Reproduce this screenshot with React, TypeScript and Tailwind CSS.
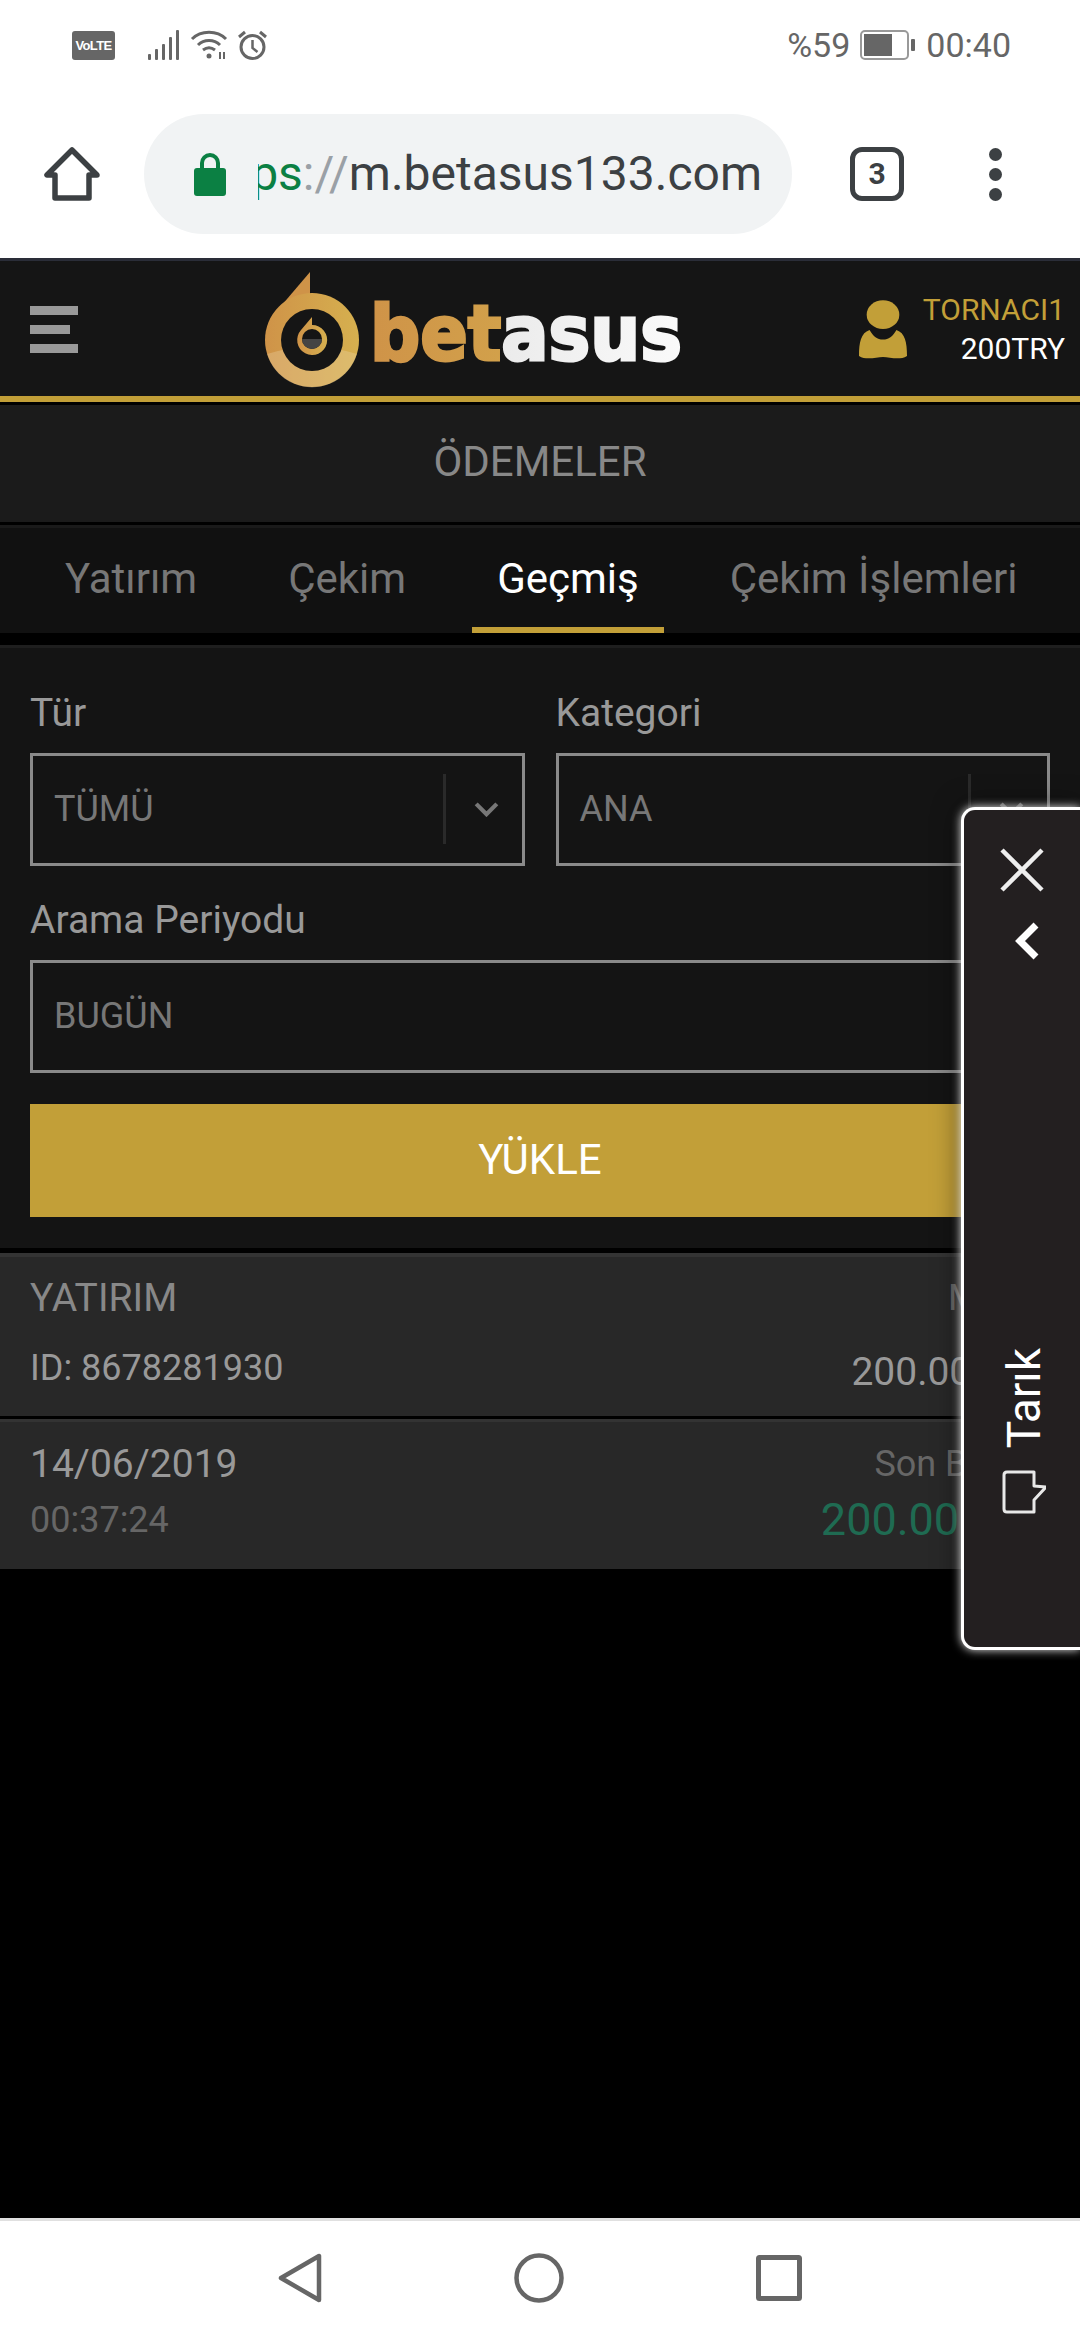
import type { ReactNode } from 'react'

function StatusBar() {
  return (
    <div className="flex h-[96px] items-center justify-between pb-[6px] pl-[72px] pr-[69px]">
      <div className="flex items-center">
        <div className="flex h-[29px] w-[43px] items-center justify-center rounded-[3px] bg-[#666] text-[13px] font-bold leading-none tracking-tighter text-white [font-family:'Liberation_Sans',sans-serif]">
          VoLTE
        </div>
        <svg className="ml-[33px]" width="34" height="30" viewBox="0 0 34 30" fill="#666">
          <rect x="0" y="24" width="3" height="6" rx="1" />
          <rect x="7" y="19" width="3" height="11" rx="1" />
          <rect x="14" y="14" width="3" height="16" rx="1" />
          <rect x="21" y="7" width="3" height="23" rx="1" />
          <rect x="28" y="0" width="3" height="30" rx="1" />
        </svg>
        <svg className="ml-[8px]" width="38" height="30" viewBox="0 0 38 30" fill="none" stroke="#666" strokeWidth="3">
          <path d="M2 9c9-9 25-9 34 0" />
          <path d="M8 15c6-6 16-6 22 0" />
          <path d="M13 20c4-3 8-3 12 0" />
          <circle cx="19" cy="26" r="2.5" fill="#666" stroke="none" />
          <path d="M30 22v7M34 22v7" strokeWidth="2" />
        </svg>
        <svg className="ml-[9px]" width="31" height="31" viewBox="0 0 31 31" fill="none" stroke="#666" strokeWidth="3">
          <circle cx="15.5" cy="17" r="11.5" />
          <path d="M15.5 10v8l5 4" strokeWidth="2.5" />
          <path d="M2 7l6-5M29 7l-6-5" />
        </svg>
      </div>
      <div className="flex items-center text-[34px] leading-none text-[#666]">
        <span>%59</span>
        <svg className="ml-[10px]" width="56" height="30" viewBox="0 0 56 30">
          <rect x="1" y="1" width="47" height="28" rx="4" fill="none" stroke="#999" strokeWidth="2" />
          <rect x="4" y="4" width="28" height="22" fill="#666" />
          <rect x="51" y="9" width="4" height="12" rx="1" fill="#666" />
        </svg>
        <span className="ml-[10px]">00:40</span>
      </div>
    </div>
  )
}

function BrowserBar() {
  return (
    <div className="flex h-[162px] items-center pb-[6px]">
      <svg className="ml-[44px]" width="56" height="54" viewBox="0 0 56 54" fill="none" stroke="#3c4043" strokeWidth="5.5" strokeLinejoin="round">
        <path d="M28 3L3 28h8v23h34V28h8z" />
      </svg>
      <div className="ml-[44px] flex h-[120px] w-[648px] items-center rounded-full bg-[#f1f3f4] pl-[50px] pr-[30px]">
        <svg width="32" height="44" viewBox="0 0 32 44" className="shrink-0">
          <path d="M8 18v-7a8 8 0 0 1 16 0v7" fill="none" stroke="#0b8043" strokeWidth="4" />
          <rect x="0" y="16" width="32" height="28" rx="3" fill="#0b8043" />
        </svg>
        <div className="ml-[32px] flex flex-1 justify-end overflow-hidden whitespace-nowrap text-[48px] leading-[56px]">
          <span className="shrink-0">
            <span className="text-[#0b8043]">https</span>
            <span className="text-[#9aa0a6]">://</span>
            <span className="text-[#3c4043]">m.betasus133.com</span>
          </span>
        </div>
      </div>
      <div className="ml-[58px] flex h-[54px] w-[54px] items-center justify-center rounded-[12px] border-[5px] border-[#3c4043] text-[30px] font-bold leading-none text-[#3c4043]">
        3
      </div>
      <div className="ml-[85px] flex flex-col gap-[7px]">
        <span className="h-[13px] w-[13px] rounded-full bg-[#3c4043]" />
        <span className="h-[13px] w-[13px] rounded-full bg-[#3c4043]" />
        <span className="h-[13px] w-[13px] rounded-full bg-[#3c4043]" />
      </div>
    </div>
  )
}

function Logo() {
  return (
    <svg width="460" height="116" viewBox="0 0 460 116">
      <defs>
        <linearGradient id="markGold" x1="0" x2="1" y1="0" y2="0">
          <stop offset="0" stopColor="#cf9348" />
          <stop offset="1" stopColor="#d6b04f" />
        </linearGradient>
        <linearGradient id="betGold" x1="0" x2="1" y1="0" y2="0">
          <stop offset="0" stopColor="#cf9348" />
          <stop offset="1" stopColor="#d6b34e" />
        </linearGradient>
        <linearGradient id="asusWhite" x1="0" x2="1" y1="0" y2="0">
          <stop offset="0" stopColor="#e0e0e0" />
          <stop offset="1" stopColor="#fafafa" />
        </linearGradient>
      </defs>
      <path d="M46 0v24L6 47z" fill="#cf9348" />
      <circle cx="48" cy="68" r="47" fill="url(#markGold)" />
      <path d="M3 82A47 47 0 0 0 93 82Q48 68 3 82z" fill="#f0dcb4" opacity="0.3" />
      <circle cx="48" cy="68" r="31" fill="#151515" />
      <path d="M48 45v8a15 15 0 1 1-11 5z" fill="url(#markGold)" />
      <circle cx="48" cy="67" r="10" fill="#151515" />
      <path d="M38 67h20a10 10 0 0 1-20 0z" fill="#444" />
      <text x="106" y="88" fontSize="76" fontWeight="700" fontFamily="'DejaVu Sans',sans-serif" textLength="312" lengthAdjust="spacingAndGlyphs" strokeWidth="3">
        <tspan fill="url(#betGold)" stroke="url(#betGold)">bet</tspan>
        <tspan fill="url(#asusWhite)" stroke="url(#asusWhite)">asus</tspan>
      </text>
    </svg>
  )
}

function Header() {
  return (
    <div className="flex h-[135px] items-center bg-[#151515] pt-[2px]">
      <div className="ml-[30px] flex w-[48px] flex-col gap-[10px]">
        <span className="h-[9px] w-[48px] bg-[#999]" />
        <span className="h-[9px] w-[40px] bg-[#999]" />
        <span className="h-[9px] w-[48px] bg-[#999]" />
      </div>
      <div className="ml-[186px]">
        <Logo />
      </div>
      <svg className="ml-[135px]" width="48" height="62" viewBox="0 0 50 62" fill="#c29f38">
        <ellipse cx="25" cy="15" rx="17" ry="15" />
        <path d="M0 58c0-14 2-24 11-27 4 7 8 10 14 10s10-3 14-10c9 3 11 13 11 27-8 5-18 1-25 1S8 63 0 58z" />
      </svg>
      <div className="ml-auto flex flex-col items-end gap-[9px] pr-[15px] text-[30px] leading-[30px]">
        <span className="text-[#c29f38]">TORNACI1</span>
        <span className="text-white">200TRY</span>
      </div>
    </div>
  )
}

function Tabs() {
  const tabs = ['Yatırım', 'Çekim', 'Geçmiş', 'Çekim İşlemleri']
  return (
    <div className="flex h-[105px] gap-[41px] bg-[#111] px-[40px]">
      {tabs.map((t) => (
        <div
          key={t}
          className={
            t === 'Geçmiş'
              ? 'flex shrink-0 items-center whitespace-nowrap border-b-[6px] border-[#c29f38] px-[25px] pt-[1px] text-[42px] text-white'
              : 'flex shrink-0 items-center whitespace-nowrap border-b-[6px] border-transparent px-[25px] pt-[1px] text-[42px] text-[#777]'
          }
        >
          {t}
        </div>
      ))}
    </div>
  )
}

function Select({ value }: { value: string }) {
  return (
    <div className="flex h-[113px] items-center border-[3px] border-[#8a8a8a] pb-[1px] pl-[21px] text-[36px] text-[#777]">
      <span className="flex-1">{value}</span>
      <span className="h-[70px] w-[3px] bg-[#2a2a2a]" />
      <svg className="ml-[28px] mr-[23px]" width="25" height="15" viewBox="0 0 26 16" fill="none" stroke="#777" strokeWidth="4.5">
        <path d="M2 2l11 11L24 2" />
      </svg>
    </div>
  )
}

function Field({ label, children }: { label: string; children: ReactNode }) {
  return (
    <div className="flex flex-col">
      <div className="mb-[16px] h-[48px] text-[39px] leading-[48px] text-[#999]">{label}</div>
      {children}
    </div>
  )
}

function Form() {
  return (
    <div className="flex flex-col border-t-[3px] border-[#1e1e1e] bg-[#141414] px-[30px] pb-[31px] pt-[41px]">
      <div className="grid grid-cols-2 gap-[31px]">
        <Field label="Tür">
          <Select value="TÜMÜ" />
        </Field>
        <Field label="Kategori">
          <Select value="ANA" />
        </Field>
      </div>
      <div className="mt-[30px]">
        <Field label="Arama Periyodu">
          <Select value="BUGÜN" />
        </Field>
      </div>
      <div className="mt-[31px] flex h-[113px] items-center justify-center bg-[#c29f38] pb-[2px] text-[42px] text-white">YÜKLE</div>
    </div>
  )
}

function Cards() {
  return (
    <div className="flex flex-col">
      <div className="flex h-[163px] flex-col border-t-[4px] border-[#333] bg-[#282828] px-[30px] pt-[16px]">
        <div className="flex items-center justify-between text-[39px] leading-[50px] text-[#888]">
          <span>YATIRIM</span>
          <span className="text-[36px] text-[#666]">Miktar</span>
        </div>
        <div className="mt-[17px] flex items-center justify-between text-[36px] leading-[48px] text-[#999]">
          <span>ID: 8678281930</span>
          <span className="pt-[8px] text-[39px]">200.00 TRY</span>
        </div>
      </div>
      <div className="mt-[3px] flex h-[150px] flex-col border-t-[3px] border-[#333] bg-[#282828] px-[30px] pt-[17px]">
        <div className="flex items-center justify-between text-[39px] leading-[50px] text-[#999]">
          <span>14/06/2019</span>
          <span className="text-[36px] text-[#666]">Son Bakiye</span>
        </div>
        <div className="mt-[6px] flex items-center justify-between text-[36px] leading-[50px] text-[#666]">
          <span>00:37:24</span>
          <span className="text-[45px] text-[#1f6b52]">200.00 TRY</span>
        </div>
      </div>
    </div>
  )
}

function SidePanel() {
  return (
    <div className="absolute right-0 top-[807px] flex h-[843px] w-[119px] flex-col items-center rounded-l-[14px] border-y-[3px] border-l-[3px] border-white bg-[#231f20] shadow-[0_0_10px_rgba(255,255,255,0.9),0_0_28px_rgba(0,0,0,0.55)]">
      <svg className="mt-[38px]" width="44" height="44" viewBox="0 0 44 44" fill="none" stroke="#eee" strokeWidth="4.500">
        <path d="M2 2l40 40M42 2L2 42" />
      </svg>
      <svg className="ml-[9px] mt-[30px]" width="24" height="38" viewBox="0 0 24 38" fill="none" stroke="#fff" strokeWidth="7">
        <path d="M21 3L5 19l16 16" />
      </svg>
      <span className="ml-[3px] mt-[388px] rotate-180 whitespace-nowrap text-[46px] leading-[46px] text-white [writing-mode:vertical-rl]">Tarık</span>
      <svg className="ml-[3px] mt-[22px]" width="44" height="44" viewBox="0 0 44 44" fill="none" stroke="#e8e8e8" strokeWidth="3" strokeLinejoin="round">
        <path d="M5 2h27v14l12 1-12 13v12H5q-3 0-3-3V5q0-3 3-3z" />
      </svg>
    </div>
  )
}

function NavBar() {
  return (
    <div className="flex h-[122px] items-center justify-center border-t-[3px] border-[#e0e0e0] bg-white pb-[6px]">
      <svg className="mr-[192px]" width="44" height="50" viewBox="0 0 44 50" fill="none" stroke="#666" strokeWidth="4.500" strokeLinejoin="round">
        <path d="M41 3v44L3 25z" />
      </svg>
      <svg className="mr-[192px]" width="50" height="50" viewBox="0 0 50 50" fill="none" stroke="#666" strokeWidth="4.500">
        <circle cx="25" cy="25" r="22.500" />
      </svg>
      <svg width="46" height="46" viewBox="0 0 46 46" fill="none" stroke="#666" strokeWidth="5">
        <rect x="2.500" y="2.500" width="41" height="41" rx="1" />
      </svg>
    </div>
  )
}

export default function App() {
  return (
    <div className="relative flex h-[2340px] w-[1080px] flex-col overflow-hidden bg-black [font-family:Roboto,sans-serif]">
      <div className="bg-white">
        <StatusBar />
        <BrowserBar />
      </div>
      <div className="h-[3px] bg-[#2a2d38]" />
      <Header />
      <div className="h-[6px] bg-[#c29f38]" />
      <div className="mt-[3px] flex h-[117px] items-center justify-center bg-[#1b1b1b] pb-[4px] text-[42px] text-[#888]">ÖDEMELER</div>
      <div className="mt-[3px] h-[3px] bg-[#1a1a1a]" />
      <Tabs />
      <div className="h-[12px]" />
      <Form />
      <div className="h-[5px]" />
      <Cards />
      <div className="flex-1" />
      <NavBar />
      <SidePanel />
    </div>
  )
}
